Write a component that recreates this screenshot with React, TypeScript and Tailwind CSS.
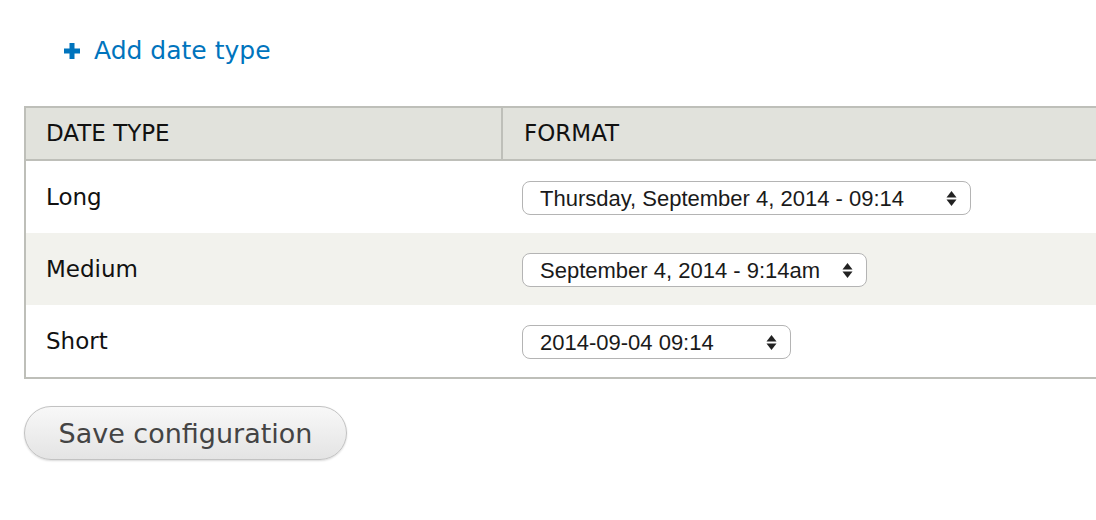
const rows = [
  { name: "Long", value: "Thursday, September 4, 2014 - 09:14", width: "w-[449px]" },
  { name: "Medium", value: "September 4, 2014 - 9:14am", width: "w-[345px]" },
  { name: "Short", value: "2014-09-04 09:14", width: "w-[269px]" },
];

function SelectBox({ value, width }: { value: string; width: string }) {
  return (
    <div
      className={`${width} h-[34px] mt-[2px] flex items-center justify-between pl-[17px] pr-[13px] rounded-[8px] border border-[#b4b4b4] bg-white text-[22px] text-[#1a1a1a] font-['Liberation_Sans',Arial,sans-serif]`}
    >
      <span>{value}</span>
      <svg width="11" height="17" viewBox="0 0 11 17" className="fill-[#222]">
        <path d="M5.5 1 L10.5 7.5 H0.5 Z" />
        <path d="M5.5 16 L10.5 9.5 H0.5 Z" />
      </svg>
    </div>
  );
}

export default function App() {
  return (
    <div className="w-[1096px] h-[520px] overflow-hidden bg-white font-['DejaVu_Sans',Verdana,sans-serif]">
      <div className="pt-[36px] pl-[64px] flex items-center gap-[14px] text-[#0074bd]">
        <svg width="16" height="16" viewBox="0 0 16 16" className="fill-[#0074bd]">
          <path d="M5.5 0 H10.5 V5.5 H16 V10.5 H10.5 V16 H5.5 V10.5 H0 V5.5 H5.5 Z" />
        </svg>
        <span className="text-[25px] leading-[30px]">Add date type</span>
      </div>

      <div className="mt-[40px] ml-[24px] w-[1100px] border-2 border-r-0 border-[#bebfb9]">
        <div className="flex h-[53px] bg-[#e1e2dc] border-b-2 border-[#bebfb9] text-[23px] text-[#111]">
          <div className="w-[477px] pl-[20px] flex items-center border-r-2 border-[#bebfb9]">DATE TYPE</div>
          <div className="flex-1 pl-[21px] flex items-center">FORMAT</div>
        </div>
        {rows.map((r, i) => (
          <div
            key={r.name}
            className={`flex items-center h-[72px] text-[23px] text-[#111] ${i === 1 ? "bg-[#f2f2ed]" : "bg-white"}`}
          >
            <div className="w-[479px] pl-[20px]">{r.name}</div>
            <div className="flex-1 pl-[17px]">
              <SelectBox value={r.value} width={r.width} />
            </div>
          </div>
        ))}
      </div>

      <button className="mt-[27px] ml-[24px] w-[323px] h-[54px] pt-[3px] rounded-full border border-[#c2c2c2] bg-gradient-to-b from-[#f8f8f8] to-[#e4e4e4] text-[27px] text-[#444] shadow-[0_1px_2px_rgba(0,0,0,0.15)]">
        Save configuration
      </button>
    </div>
  );
}
